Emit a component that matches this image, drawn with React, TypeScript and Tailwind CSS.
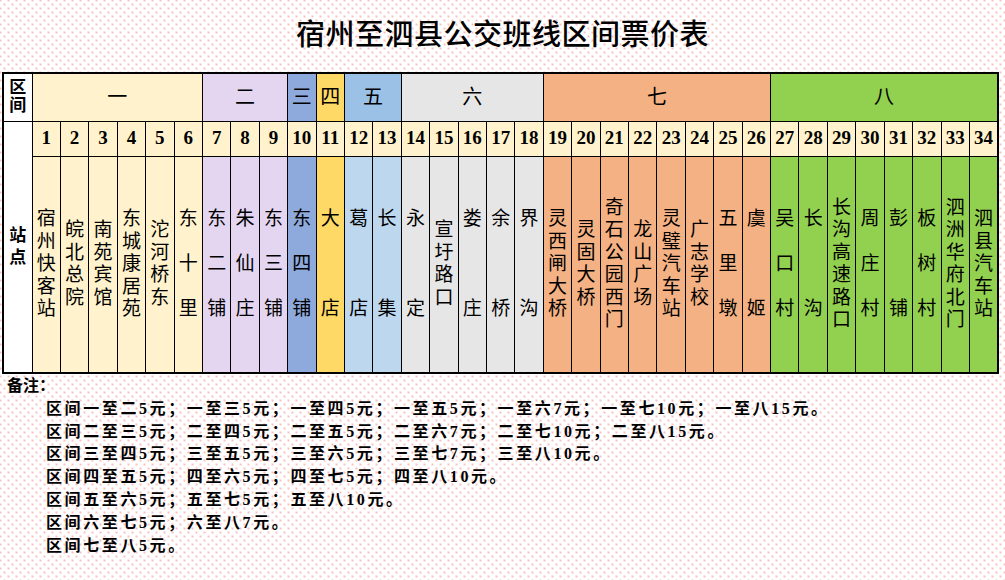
const groups = [
  { label: "一", head: "bg-[#FFF2CC]", body: "bg-[#FFF2CC]", stops: ["宿州快客站", "皖北总院", "南苑宾馆", "东城康居苑", "沱河桥东", "东十里"] },
  { label: "二", head: "bg-[#E4D6F1]", body: "bg-[#E4D6F1]", stops: ["东二铺", "朱仙庄", "东三铺"] },
  { label: "三", head: "bg-[#8EA9DB]", body: "bg-[#8EA9DB]", stops: ["东四铺"] },
  { label: "四", head: "bg-[#FFD966]", body: "bg-[#FFD966]", stops: ["大店"] },
  { label: "五", head: "bg-[#9BC2E6]", body: "bg-[#BDD7EE]", stops: ["葛店", "长集"] },
  { label: "六", head: "bg-[#E7E6E6]", body: "bg-[#E7E6E6]", stops: ["永定", "宣圩路口", "娄庄", "余桥", "界沟"] },
  { label: "七", head: "bg-[#F4B183]", body: "bg-[#F4B183]", stops: ["灵西闸大桥", "灵固大桥", "奇石公园西门", "龙山广场", "灵璧汽车站", "广志学校", "五里墩", "虞姬"] },
  { label: "八", head: "bg-[#92D050]", body: "bg-[#92D050]", stops: ["吴口村", "长沟", "长沟高速路口", "周庄村", "彭铺", "板树村", "泗洲华府北门", "泗县汽车站"] },
];

const notes = [
  "区间一至二5元；一至三5元；一至四5元；一至五5元；一至六7元；一至七10元；一至八15元。",
  "区间二至三5元；二至四5元；二至五5元；二至六7元；二至七10元；二至八15元。",
  "区间三至四5元；三至五5元；三至六5元；三至七7元；三至八10元。",
  "区间四至五5元；四至六5元；四至七5元；四至八10元。",
  "区间五至六5元；五至七5元；五至八10元。",
  "区间六至七5元；六至八7元。",
  "区间七至八5元。",
];

const font = "font-['Liberation_Serif','Noto_Sans_CJK_SC',serif]";

// short names are spread over the height of five characters
const StopName = ({ name }: { name: string }) => {
  const chars = name.split("");
  if (chars.length <= 3) {
    return (
      <div className="flex flex-col items-center justify-between h-[112px]">
        {chars.map((c, i) => (
          <span key={i} className="leading-[22px]">{c}</span>
        ))}
      </div>
    );
  }
  return (
    <div className="flex flex-col items-center">
      {chars.map((c, i) => (
        <span key={i} className="leading-[22.5px]">{c}</span>
      ))}
    </div>
  );
};

const App = () => {
  let n = 0;
  const stops = groups.flatMap((g) => g.stops.map((s) => ({ name: s, body: g.body, no: ++n })));

  return (
    <div
      className={`w-[1005px] h-[580px] overflow-hidden bg-white ${font} text-black bg-[radial-gradient(circle,#e66_0.5px,transparent_0.85px),radial-gradient(circle,#e66_0.5px,transparent_0.85px)] bg-[length:8px_8px] bg-[position:0.5px_0.5px,4.5px_4.5px]`}
    >
      {/* Title */}
      <div className="h-[72px] flex items-center justify-center">
        <h1 className="text-[29px] font-medium tracking-[0.5px]">宿州至泗县公交班线区间票价表</h1>
      </div>

      {/* Table */}
      <table className="table-fixed border-collapse w-[997px] ml-[2px] border-2 border-black">
        <colgroup>
          <col className="w-[29px]" />
          {stops.map((s) => (
            <col key={s.no} />
          ))}
        </colgroup>
        <tbody>
          <tr className="h-[48px]">
            <td className="border border-black bg-white p-0">
              <div className="flex flex-col items-center text-[17px] font-bold leading-[18px]">
                <span>区</span>
                <span>间</span>
              </div>
            </td>
            {groups.map((g) => (
              <td
                key={g.label}
                colSpan={g.stops.length}
                className={`border border-black p-0 text-center text-[20px] ${g.head}`}
              >
                {g.label}
              </td>
            ))}
          </tr>
          <tr className="h-[35px]">
            <td rowSpan={2} className="border border-black bg-white p-0">
              <div className="flex flex-col items-center text-[17px] font-bold leading-[22px]">
                <span>站</span>
                <span>点</span>
              </div>
            </td>
            {stops.map((s) => (
              <td key={s.no} className="border border-black bg-[#FFF2CC] p-0 text-center text-[19px] font-bold">
                {s.no}
              </td>
            ))}
          </tr>
          <tr className="h-[217px]">
            {stops.map((s) => (
              <td key={s.no} className={`border border-black p-0 text-[19px] ${s.body}`}>
                <StopName name={s.name} />
              </td>
            ))}
          </tr>
        </tbody>
      </table>

      {/* Notes */}
      <div className="pl-[7px] pt-[1px] text-[16px] font-bold leading-[22.8px]">
        <div>备注：</div>
        <div className="pl-[39px] tracking-[2.6px]">
          {notes.map((line, i) => (
            <div key={i}>{line}</div>
          ))}
        </div>
      </div>
    </div>
  );
};

export default App;
